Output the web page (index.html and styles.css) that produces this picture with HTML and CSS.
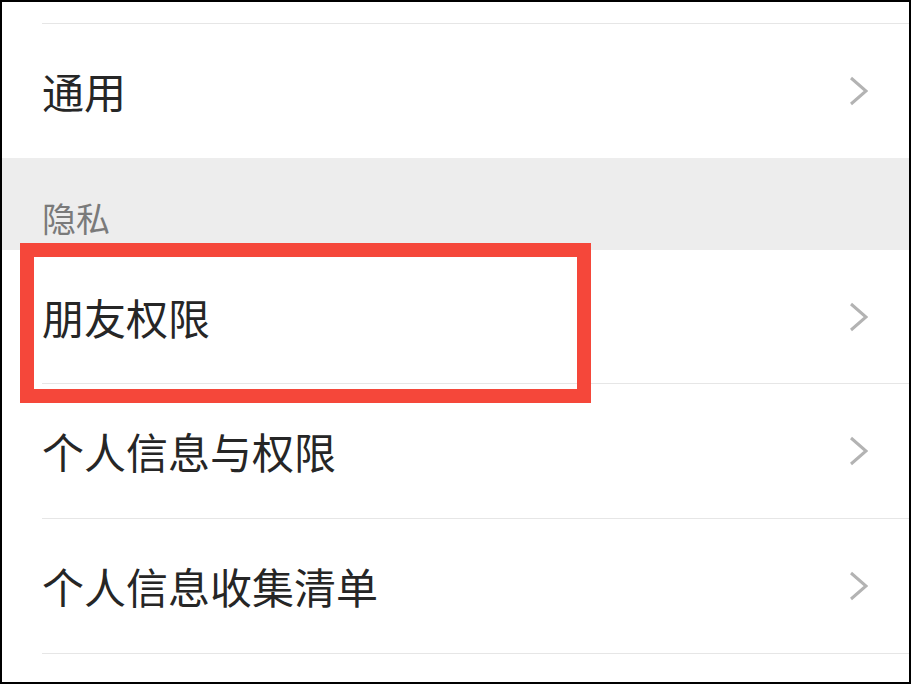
FILE: index.html
```html
<!DOCTYPE html>
<html lang="zh-CN">
<head>
    <meta charset="UTF-8">
    <meta name="viewport" content="width=device-width, initial-scale=1.0">
    <title>设置</title>
    <link rel="stylesheet" href="styles.css">
</head>
<body>
    <div class="frame">
        <div class="top-gap"></div>
        <div class="row">
            <span class="label">通用</span>
            <svg class="arrow" viewBox="0 0 19 30"><polyline points="2,2 17,15 2,28"/></svg>
        </div>
        <div class="section">隐私</div>
        <div class="row">
            <span class="label">朋友权限</span>
            <svg class="arrow" viewBox="0 0 19 30"><polyline points="2,2 17,15 2,28"/></svg>
        </div>
        <div class="row">
            <span class="label">个人信息与权限</span>
            <svg class="arrow" viewBox="0 0 19 30"><polyline points="2,2 17,15 2,28"/></svg>
        </div>
        <div class="row">
            <span class="label">个人信息收集清单</span>
            <svg class="arrow" viewBox="0 0 19 30"><polyline points="2,2 17,15 2,28"/></svg>
        </div>
        <div class="highlight"></div>
    </div>
</body>
</html>
```

FILE: styles.css
```css
html, body {
    margin: 0;
    padding: 0;
    background: #000;
}
.frame {
    position: relative;
    box-sizing: border-box;
    width: 911px;
    height: 684px;
    border: 2px solid #000;
    background: #fff;
    overflow: hidden;
    font-family: "Noto Sans CJK SC", "Noto Sans", sans-serif;
}
.top-gap {
    height: 21px;
    margin-left: 40px;
    border-bottom: 1px solid #e6e6e6;
}
.row {
    display: flex;
    justify-content: space-between;
    align-items: center;
    height: 134px;
    margin-left: 40px;
    padding-right: 41px;
    border-bottom: 1px solid #e6e6e6;
}
.section + .row {
    height: 133px;
}
.label {
    font-size: 42px;
    color: #262626;
    line-height: 1;
}
.arrow {
    width: 19px;
    height: 30px;
}
.arrow polyline {
    fill: none;
    stroke: #b3b3b3;
    stroke-width: 3;
}
.section {
    box-sizing: border-box;
    height: 92px;
    margin-top: -1px;
    padding: 40px 0 0 40px;
    background: #ededed;
    color: #7a7a7a;
    font-size: 34px;
    line-height: 40px;
}
.highlight {
    position: absolute;
    left: 18px;
    top: 241px;
    width: 571px;
    height: 160px;
    box-sizing: border-box;
    border: 14px solid #f5473a;
}
```
